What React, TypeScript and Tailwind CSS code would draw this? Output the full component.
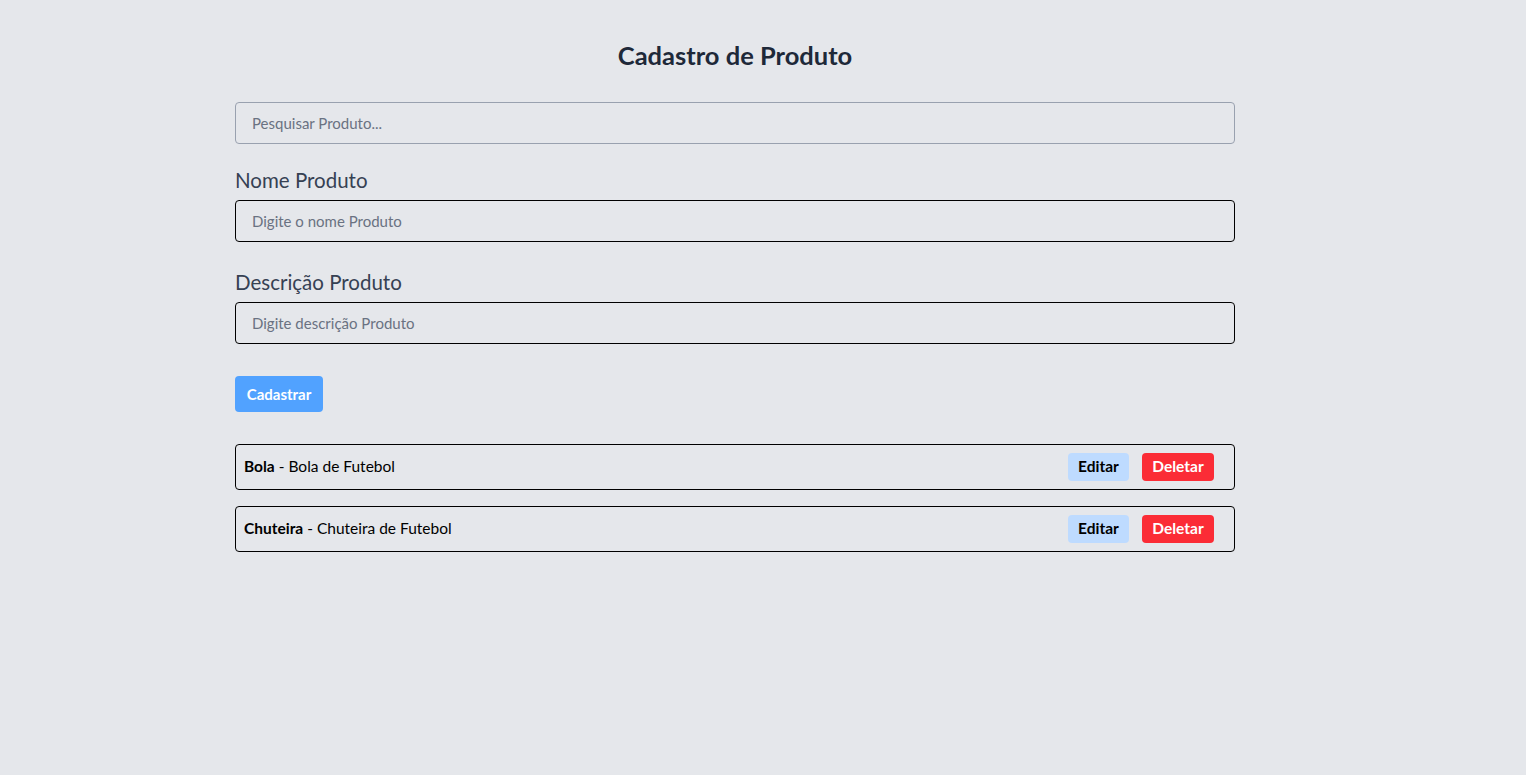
import React, { useState } from 'react';

interface Produto {
  id: number;
  nome: string;
  descricao: string;
}

const inicial: Produto[] = [
  { id: 1, nome: 'Bola', descricao: 'Bola de Futebol' },
  { id: 2, nome: 'Chuteira', descricao: 'Chuteira de Futebol' },
];

const App: React.FC = () => {
  const [produtos] = useState<Produto[]>(inicial);

  return (
    <div className="min-h-screen bg-[#e5e7eb] font-['Lato',sans-serif]">
      <div className="w-[1000px] ml-[235px] pt-[39px]">
        <h1 className="text-center text-[25.5px] leading-[32px] font-bold text-[#1e2939]">Cadastro de Produto</h1>

        <input
          type="text"
          placeholder="Pesquisar Produto..."
          className="mt-[31px] w-full h-[42px] px-4 text-[15px] border border-[#99a1af] rounded bg-transparent placeholder:text-[#6a7282] outline-none"
        />

        <label className="block mt-[22px] text-[20.5px] leading-[28px] text-[#364153]">Nome Produto</label>
        <input
          type="text"
          placeholder="Digite o nome Produto"
          className="mt-[6px] w-full h-[42px] px-4 text-[15px] border border-black rounded bg-transparent placeholder:text-[#6a7282] outline-none"
        />

        <label className="block mt-[26px] text-[20.5px] leading-[28px] text-[#364153]">Descrição Produto</label>
        <input
          type="text"
          placeholder="Digite descrição Produto"
          className="mt-[6px] w-full h-[42px] px-4 text-[15px] border border-black rounded bg-transparent placeholder:text-[#6a7282] outline-none"
        />

        <button className="mt-[32px] h-[36px] px-2 w-[88px] rounded bg-[#51a2ff] text-white font-bold text-[15px]">Cadastrar</button>

        <ul className="mt-[32px] flex flex-col gap-4">
          {produtos.map((p) => (
            <li key={p.id} className="h-[46px] flex items-center justify-between pl-2 pr-[20px] border border-black rounded text-[15.5px] text-black">
              <span>
                <strong className="font-bold">{p.nome}</strong> - {p.descricao}
              </span>
              <div className="flex gap-[13px]">
                <button className="h-[28px] w-[61px] rounded bg-[#bedbff] font-bold text-black">Editar</button>
                <button className="h-[28px] w-[72px] rounded bg-[#fb2c36] font-bold text-white">Deletar</button>
              </div>
            </li>
          ))}
        </ul>
      </div>
    </div>
  );
};

export default App;
